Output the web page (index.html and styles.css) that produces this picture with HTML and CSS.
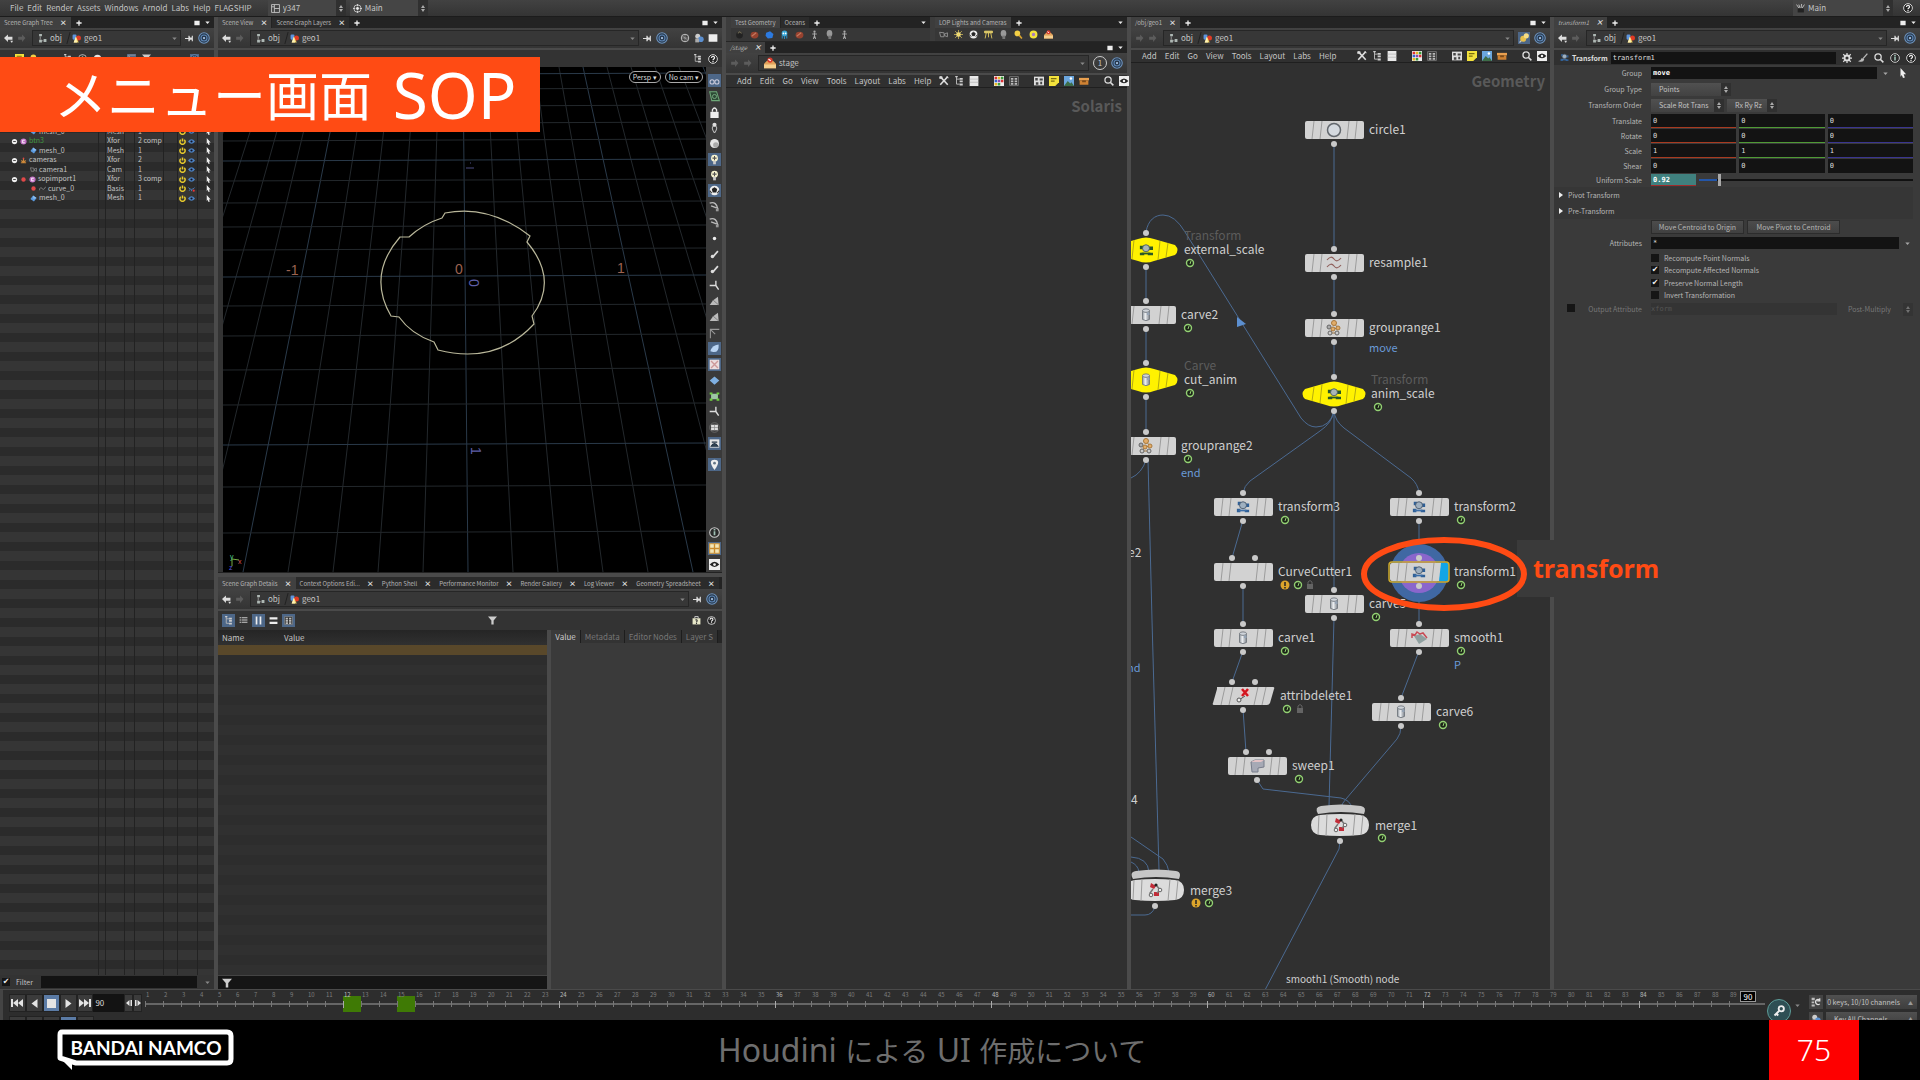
FILE: index.html
```html
<!DOCTYPE html>
<html lang="ja">
<head>
<meta charset="utf-8">
<title>メニュー画面 SOP</title>
<link rel="stylesheet" href="styles.css">
</head>
<body>
<svg class="sprite" aria-hidden="true">
  <defs>
    <linearGradient id="steel" x1="0" x2="1"><stop offset="0" stop-color="#8f959c"/><stop offset=".4" stop-color="#eef1f4"/><stop offset="1" stop-color="#7d838b"/></linearGradient>
    <symbol id="back" viewBox="0 0 16 16"><path d="M0 7l7-6v4h8v5H7v4zM11 12h5l-2 4z" fill="#ddd"/></symbol>
    <symbol id="fwd" viewBox="0 0 16 16"><path d="M15 7L9 1v4H2v5h7v4z" fill="#5c5c5c"/></symbol>
    <symbol id="obj" viewBox="0 0 16 16"><path d="M2 0h5v4H2zM2 10h5v5H2zM10 9h5v5h-5z" fill="#aeb8b4"/><path d="M4 4v6M7 12h3" stroke="#888" stroke-width="2"/></symbol>
    <symbol id="geo" viewBox="0 0 16 16"><rect x="1" y="1" width="7" height="9" rx="2" fill="#5d94dc"/><circle cx="11.500" cy="7" r="4.500" fill="#e03a24"/><path d="M7 5l5 10H3z" fill="#f4d667"/><path d="M7 5l2 10H3z" fill="#fff3b8"/></symbol>
    <symbol id="pin" viewBox="0 0 16 16"><path d="M0 7h6v2H0zM6 3h2l1 3h3V3h2v10h-2v-3H9l-1 3H6z" fill="#ddd"/></symbol>
    <symbol id="target" viewBox="0 0 16 16"><circle cx="8" cy="8" r="7" fill="#25364a" stroke="#6e93bd" stroke-width="1.500"/><circle cx="8" cy="8" r="4" fill="none" stroke="#5d86b5" stroke-width="1.500"/><circle cx="8" cy="8" r="1.500" fill="#a9c4e4"/></symbol>
    <symbol id="help" viewBox="0 0 16 16"><circle cx="8" cy="8" r="7" fill="#222" stroke="#ddd" stroke-width="1.500"/><path d="M5.500 6.500c0-3.500 5-3.500 5-.5 0 2-2.500 2-2.500 4M8 11v2" fill="none" stroke="#eee" stroke-width="2"/></symbol>
    <symbol id="info" viewBox="0 0 16 16"><circle cx="8" cy="8" r="7" fill="#2a2a2a" stroke="#ccc" stroke-width="1.500"/><path d="M8 3v2M8 6v6" stroke="#9fc0b4" stroke-width="2.500"/></symbol>
    <symbol id="search" viewBox="0 0 16 16"><circle cx="6.500" cy="6.500" r="5" fill="none" stroke="#ddd" stroke-width="2"/><path d="M10 10l5 5" stroke="#ddd" stroke-width="2.500"/></symbol>
    <symbol id="eye" viewBox="0 0 16 16"><path d="M0 0h16v16H0z" fill="#eee"/><path d="M1 8q7-8 14 0-7 7-14 0z" fill="#222"/><circle cx="8" cy="8" r="2" fill="#eee"/></symbol>
    <symbol id="tools" viewBox="0 0 16 16"><path d="M2 1l12 13M14 1L2 14" stroke="#ddd" stroke-width="2.500"/><path d="M1 1h4v3H1zM12 0l4 4" stroke="#ddd" fill="#ddd" stroke-width="1"/></symbol>
    <symbol id="tree" viewBox="0 0 16 16"><path d="M4 1v12M4 5h5M4 13h5" fill="none" stroke="#bbb" stroke-width="1.500"/><path d="M9 3h5v3H9zM9 7h5v3H9zM9 12h5v3H9zM2 0h4v2H2z" fill="#ccc"/></symbol>
    <symbol id="list" viewBox="0 0 16 16"><path d="M1 0h14v16H1z" fill="#e8e8e8"/><path d="M1 5h14M1 10h14" stroke="#aaa"/></symbol>
    <symbol id="bullets" viewBox="0 0 16 16"><path d="M1 2h3v2H1zM5 2h10v2H5zM1 6h3v2H1zM5 6h10v2H5zM1 10h3v2H1zM5 10h10v2H5z" fill="#ccc"/></symbol>
    <symbol id="columns" viewBox="0 0 16 16"><path d="M3 1h3v14H3zM10 1h3v14h-3z" fill="#eee"/></symbol>
    <symbol id="rows" viewBox="0 0 16 16"><path d="M1 2h14v4H1zM1 10h14v4H1z" fill="#eee"/></symbol>
    <symbol id="kit" viewBox="0 0 16 16"><path d="M1 4h14v11H1z" fill="#e6e6c8"/><path d="M5 4V1h6v3" fill="none" stroke="#ddd" stroke-width="1.500"/><path d="M6 7q4-1 3 2l-1 2M8 12v2" fill="none" stroke="#333" stroke-width="2"/></symbol>
    <symbol id="colors" viewBox="0 0 16 16"><path d="M0 0h16v16H0z" fill="#eee"/><path d="M1 1h4v4H1zM11 6h4v4h-4z" fill="#d33"/><path d="M6 1h4v4H6zM1 11h4v4H1z" fill="#e9b824"/><path d="M11 1h4v4h-4zM6 11h4v4H6z" fill="#3a9c3a"/><path d="M1 6h4v4H1z" fill="#36c"/><path d="M6 6h4v4H6z" fill="#8a4ab0"/></symbol>
    <symbol id="cells" viewBox="0 0 16 16"><path d="M1 1h14v14H1z" fill="#333" stroke="#999"/><path d="M3 3h4v3H3zM9 3h4v3H9zM3 7h4v3H3zM9 7h4v3H9zM3 11h4v3H3zM9 11h4v3H9z" fill="#bbb"/></symbol>
    <symbol id="layout" viewBox="0 0 16 16"><path d="M1 1h14v14H1zM6 1v14M6 8h9M1 5h5" fill="none" stroke="#ccc" stroke-width="1.500"/></symbol>
    <symbol id="radial" viewBox="0 0 16 16"><circle cx="8" cy="8" r="6.500" fill="none" stroke="#ccc" stroke-width="1.500"/><circle cx="8" cy="8" r="2.500" fill="#eee"/><path d="M8 0v4M8 12v4M0 8h4M12 8h4" stroke="#ccc" stroke-width="2"/></symbol>
    <symbol id="net" viewBox="0 0 16 16"><path d="M0 1h16v14H0z" fill="#ddd"/><path d="M2 3h4v4H2zM9 4h5v3H9zM3 10h4v4H3zM10 9h3v4h-3z" fill="#444"/></symbol>
    <symbol id="note" viewBox="0 0 16 16"><path d="M0 0h16v10l-6 6H0z" fill="#f3e23c"/><path d="M3 4h9M3 8h6" stroke="#7a6d10" stroke-width="2"/></symbol>
    <symbol id="image" viewBox="0 0 16 16"><path d="M0 0h16v16H0z" fill="#6ba6de"/><path d="M0 16l6-8 4 4 2-2 4 6z" fill="#3d6d48"/><circle cx="11" cy="4" r="2" fill="#fff"/></symbol>
    <symbol id="box" viewBox="0 0 16 16"><path d="M0 3h16v4H0z" fill="#e9a050"/><path d="M1 7h14v7H1z" fill="#cf8233"/><path d="M5 7h6v3H5z" fill="#7c4a18"/></symbol>
    <symbol id="gear" viewBox="0 0 16 16"><circle cx="8" cy="8" r="4" fill="none" stroke="#ddd" stroke-width="3"/><path d="M8 0v3M8 13v3M0 8h3M13 8h3M2 2l3 3M11 11l3 3M14 2l-3 3M2 14l3-3" stroke="#ddd" stroke-width="2"/></symbol>
    <symbol id="brush" viewBox="0 0 16 16"><path d="M15 1L8 9" stroke="#bbb" stroke-width="2"/><path d="M0 13q5-1 6-5l4 2q-1 6-10 3z" fill="#bbb"/></symbol>
    <symbol id="cursor" viewBox="0 0 16 16"><path d="M4 0l9 10H9l2 5-3 1-2-5-2 3z" fill="#eee"/></symbol>
    <symbol id="win" viewBox="0 0 16 16"><path d="M1 2h14v12H1z" fill="#eee"/></symbol>
    <symbol id="caret" viewBox="0 0 16 16"><path d="M1 5h14l-7 8z" fill="#eee"/></symbol>
    <symbol id="caret-dim" viewBox="0 0 16 16"><path d="M1 5h14l-7 8z" fill="#888"/></symbol>
    <symbol id="plus" viewBox="0 0 16 16"><path d="M8 1v14M1 8h14" stroke="#eee" stroke-width="3.500"/></symbol>
    <symbol id="funnel" viewBox="0 0 16 16"><path d="M0 1h16l-6 7v7H6V8z" fill="#ccc"/></symbol>
    <symbol id="power" viewBox="0 0 16 16"><path d="M4 4a6 6 0 1 0 8 0M8 1v7" fill="none" stroke="#e6c92c" stroke-width="3.500"/></symbol>
    <symbol id="view" viewBox="0 0 16 16"><path d="M0 8q8-10 16 0-8 10-16 0z" fill="#4d83c4"/><circle cx="8" cy="8" r="2.500" fill="#112"/></symbol>
    <symbol id="mesh" viewBox="0 0 16 16"><path d="M7 1l8 6-6 8-8-6z" fill="#5b9be0"/><path d="M7 1l1 8 7-2" fill="#8fc0f2"/></symbol>
    <symbol id="comp" viewBox="0 0 16 16"><circle cx="8" cy="8" r="7" fill="#c06fc4"/><path d="M11 5H6v6h5" fill="none" stroke="#fff" stroke-width="2"/></symbol>
    <symbol id="minus" viewBox="0 0 16 16"><circle cx="8" cy="8" r="6" fill="#eee"/><path d="M5 8h6" stroke="#333" stroke-width="2"/></symbol>
    <symbol id="cams" viewBox="0 0 16 16"><path d="M2 13h12M8 2v10M3 8l5 4 5-4" stroke="#d08a3a" stroke-width="2.500" fill="none"/><circle cx="8" cy="3" r="2" fill="#d44"/></symbol>
    <symbol id="cam" viewBox="0 0 16 16"><path d="M1 4l8 1v7H3zM10 7l5-2v7l-5-2z" fill="none" stroke="#999" stroke-width="1.500"/></symbol>
    <symbol id="curve" viewBox="0 0 16 16"><path d="M1 12C4-4 9 20 15 4" fill="none" stroke="#aaa" stroke-width="1.500"/></symbol>
    <symbol id="lid" viewBox="0 0 16 16"><path d="M1 6q7 8 14 0M4 10l-1 3M8 11v3" fill="none" stroke="#4d83c4" stroke-width="2"/><circle cx="13" cy="13" r="2.500" fill="#e33"/></symbol>
    <symbol id="rdot" viewBox="0 0 16 16"><circle cx="8" cy="8" r="5" fill="#e04848"/></symbol>
    <symbol id="stage" viewBox="0 0 16 16"><path d="M0 9l4-4h8l4 4v6H0z" fill="#e3a25a"/><path d="M0 10h16v5H0z" fill="#f5cf8e"/><circle cx="8" cy="4" r="3.500" fill="#d83a2c"/><path d="M6 3l3 2" stroke="#fff" stroke-width="1.500"/></symbol>
    <symbol id="globe" viewBox="0 0 16 16"><circle cx="8" cy="8" r="6" fill="none" stroke="#ccc" stroke-width="1.500"/><path d="M2 8h12M8 2v12M3 4l10 8" stroke="#aaa"/></symbol>
    <symbol id="people" viewBox="0 0 16 16"><circle cx="6" cy="5" r="4" fill="#ccc"/><circle cx="11" cy="10" r="4.500" fill="#5b8fd0"/><path d="M2 9h6v6H2z" fill="#aaa"/></symbol>
    <symbol id="brushes" viewBox="0 0 16 16"><path d="M1 1l4 6M5 1l2 6M10 0l-1 7M15 1l-4 6" stroke="#ccc" stroke-width="1.500"/><path d="M3 8h11v7H3z" fill="#222"/></symbol>
    <symbol id="sun" viewBox="0 0 16 16"><circle cx="8" cy="8" r="4" fill="#fff3a0"/><path d="M8 0v16M0 8h16M2 2l12 12M14 2L2 14" stroke="#e8d060" stroke-width="1.200"/></symbol>
    <symbol id="lamp" viewBox="0 0 16 16"><path d="M1 2h14v3H1zM4 5L2 15M12 5l2 10M8 5v8" stroke="#e8d060" stroke-width="1.500" fill="#f5e690"/></symbol>
    <symbol id="bulb" viewBox="0 0 16 16"><circle cx="6" cy="6" r="5" fill="#f3cf45"/><path d="M9 9l5 6" stroke="#dba52e" stroke-width="3"/></symbol>
    <symbol id="pushpin" viewBox="0 0 16 16"><path d="M2 14l5-5" stroke="#ccc" stroke-width="1.500"/><circle cx="7" cy="9" r="4" fill="#e8c04a"/><circle cx="11" cy="5" r="3.500" fill="#f6dd86"/></symbol>
    <symbol id="ring" viewBox="0 0 16 16"><circle cx="8" cy="8" r="5" fill="#a97cc0" stroke="#f3e23c" stroke-width="4"/></symbol>
    <symbol id="rock" viewBox="0 0 16 16"><circle cx="8" cy="9" r="6" fill="#222"/><path d="M5 6l3-3 4 3" stroke="#6a6450" stroke-width="2" fill="none"/></symbol>
    <symbol id="clay" viewBox="0 0 16 16"><ellipse cx="8" cy="9" rx="7" ry="6" fill="#96422f"/><path d="M3 11l8-6" stroke="#c57a60" stroke-width="2"/></symbol>
    <symbol id="cube" viewBox="0 0 16 16"><path d="M2 5l7-3 6 5-2 7-8 1-4-5z" fill="#2c7ae0"/></symbol>
    <symbol id="squid" viewBox="0 0 16 16"><circle cx="8" cy="6" r="5" fill="#3aa8d8"/><path d="M4 9v6M8 10v6M12 9v6" stroke="#2b88bb" stroke-width="2"/><circle cx="6" cy="6" r="1.500" fill="#fff"/><circle cx="10" cy="6" r="1.500" fill="#fff"/></symbol>
    <symbol id="man" viewBox="0 0 16 16"><circle cx="8" cy="3" r="2" fill="#aaa"/><path d="M8 5v6M4 7h8M8 10l-2 6M8 10l2 6" stroke="#aaa" stroke-width="1.800"/></symbol>
    <symbol id="head" viewBox="0 0 16 16"><ellipse cx="8" cy="6" rx="5" ry="6" fill="#999"/><path d="M6 10h5v6H6z" fill="#777"/></symbol>
    <symbol id="lock" viewBox="0 0 16 16"><path d="M2 7h12v9H2z" fill="#eee"/><path d="M5 7V4q3-5 6 0v3" fill="none" stroke="#eee" stroke-width="2"/></symbol>
    <symbol id="glasses" viewBox="0 0 16 16"><circle cx="4.500" cy="10" r="3" fill="none" stroke="#ccd" stroke-width="1.500"/><circle cx="11.500" cy="10" r="3" fill="none" stroke="#ccd" stroke-width="1.500"/></symbol>
    <symbol id="plane" viewBox="0 0 16 16"><path d="M1 1h10l4 13H4z" fill="#2d4a35" stroke="#6ea878" stroke-width="1.500"/><circle cx="8" cy="8" r="3" fill="none" stroke="#8fc89a"/></symbol>
    <symbol id="head-light" viewBox="0 0 16 16"><circle cx="8" cy="6" r="5" fill="#f7f3cf"/><path d="M6 10h4v5H6z" fill="#ccc"/><path d="M8 3v6M5 6h6" stroke="#555" stroke-width="1.500"/></symbol>
    <symbol id="moon" viewBox="0 0 16 16"><circle cx="8" cy="8" r="6.500" fill="#e4e4e4"/><circle cx="10" cy="10" r="4" fill="#aaa"/></symbol>
    <symbol id="marker" viewBox="0 0 16 16"><path d="M8 16C-3 2 19 2 8 16z" fill="none" stroke="#bbb" stroke-width="1.500"/><circle cx="8" cy="4" r="3" fill="#ddd"/></symbol>
    <symbol id="drop" viewBox="0 0 16 16"><path d="M8 16C0 5 2 1 8 1s8 4 0 15z" fill="#eee"/><circle cx="8" cy="6" r="2" fill="#678"/></symbol>
    <symbol id="ball" viewBox="0 0 16 16"><circle cx="8" cy="8" r="7" fill="#eee"/><path d="M5 6l3-2 3 2-1 4H6zM1 8l3 4M15 8l-3 4" fill="#222" stroke="#222" stroke-width="1.500"/></symbol>
    <symbol id="wing" viewBox="0 0 16 16"><path d="M1 3q10-3 12 9M3 7l8 3" fill="none" stroke="#bbb" stroke-width="2"/><path d="M10 11h4v4h-4z" fill="#999"/></symbol>
    <symbol id="dot" viewBox="0 0 16 16"><circle cx="8" cy="8" r="2.500" fill="#eee"/></symbol>
    <symbol id="stroke" viewBox="0 0 16 16"><path d="M13 3L6 11" stroke="#ddd" stroke-width="2.500"/><circle cx="5" cy="11" r="2.500" fill="#ddd"/></symbol>
    <symbol id="facet" viewBox="0 0 16 16"><path d="M1 13l5-7 7-5 1 12z" fill="#bbb"/><path d="M6 6l8 7" stroke="#666"/></symbol>
    <symbol id="corner" viewBox="0 0 16 16"><path d="M2 15V2h13M3 3l6 6" fill="none" stroke="#999" stroke-width="1.500"/></symbol>
    <symbol id="leaf" viewBox="0 0 16 16"><path d="M2 12Q4 3 14 2q1 12-8 11z" fill="#b9d4f3"/></symbol>
    <symbol id="check" viewBox="0 0 16 16"><path d="M1 1h14v14H1z" fill="#eadede"/><path d="M3 3l10 10M13 3L3 13" stroke="#c99" stroke-width="2"/></symbol>
    <symbol id="diamond" viewBox="0 0 16 16"><path d="M8 2l7 6-7 6-7-6z" fill="#7fb0e2"/></symbol>
    <symbol id="handles" viewBox="0 0 16 16"><path d="M3 4h10v8H3z" fill="#9ec7a5"/><path d="M1 2h4v3H1zM11 2h4v3h-4zM1 11h4v3H1zM11 11h4v3h-4z" fill="#6fd040"/></symbol>
    <symbol id="axes" viewBox="0 0 16 16"><path d="M10 8V1M10 8H1M10 8l4 6" stroke="#ddd" stroke-width="2"/></symbol>
    <symbol id="frame4" viewBox="0 0 16 16"><circle cx="8" cy="8" r="7" fill="none" stroke="#777"/><path d="M3 4h10v8H3z" fill="#ddd"/><path d="M8 4v8M3 8h10" stroke="#888"/></symbol>
    <symbol id="photo" viewBox="0 0 16 16"><path d="M1 2h14v12H1z" fill="#e4e4e4"/><path d="M3 12q5-8 10 0zM4 6h8" stroke="#234" fill="#345" stroke-width="1.500"/></symbol>
    <symbol id="grid4" viewBox="0 0 16 16"><path d="M1 1h14v14H1z" fill="#f2e6b8"/><path d="M8 1v14M1 8h14" stroke="#c98a2c" stroke-width="2"/><path d="M1 1h14v14H1z" fill="none" stroke="#d69a3c" stroke-width="1.500"/></symbol>
    <symbol id="key" viewBox="0 0 16 16"><circle cx="11" cy="5" r="3.500" fill="none" stroke="#eee" stroke-width="2.500"/><path d="M8 8l-6 6M4 11l3 3" stroke="#eee" stroke-width="2.500"/></symbol>
    <symbol id="scope" viewBox="0 0 16 16"><path d="M1 1h5v4H1zM1 7h4v3H1zM1 12h5v3H1z" fill="#bbb"/><path d="M14 5a4 4 0 1 0 0 6M14 2v4h-4" fill="none" stroke="#ddd" stroke-width="2"/></symbol>
    <symbol id="node-x" viewBox="0 0 16 16"><path d="M2 2h4v4H2z" fill="#2f5f96"/><path d="M1 10h4v4H1zM10 11h5v3h-5zM11 4h4v4h-4z" fill="#2f5f96"/><circle cx="8" cy="6" r="4" fill="#9fb0c0" stroke="#46576a"/><path d="M3 12h9" fill="none" stroke="#3c6ea8" stroke-width="2"/></symbol>
    <symbol id="node-xy" viewBox="0 0 16 16"><path d="M1 3h5v4H1zM1 11h5v3H1zM10 11h6v3h-6zM11 4h5v4h-5z" fill="#28572a"/><circle cx="8" cy="6" r="4" fill="#a9b6b6" stroke="#465a5a"/><path d="M3 12h10" stroke="#28572a" stroke-width="2"/></symbol>
    <symbol id="node-tube" viewBox="0 0 16 16"><path d="M4 3v10q4 3 8 0V3z" fill="url(#steel)" stroke="#70767d"/><ellipse cx="8" cy="3" rx="4" ry="2" fill="#cfd4da" stroke="#70767d"/><path d="M9 5h3v3H9z" fill="#96a4b5"/></symbol>
    <symbol id="node-group" viewBox="0 0 16 16"><path d="M7 2l5 6-5 1-3 4 7 0" fill="none" stroke="#a8783c"/><circle cx="8" cy="3" r="2.500" fill="#e2ad6a" stroke="#a8783c"/><circle cx="3" cy="7" r="2" fill="#aaa" stroke="#666"/><circle cx="12" cy="8" r="2" fill="#e2ad6a" stroke="#a8783c"/><circle cx="7" cy="9" r="2" fill="#e2ad6a" stroke="#a8783c"/><circle cx="4" cy="13" r="2" fill="#ccc" stroke="#666"/><circle cx="11" cy="13" r="2" fill="#ccc" stroke="#666"/></symbol>
    <symbol id="node-merge" viewBox="0 0 16 16"><path d="M4 1l5 3-2 3-4-2zM7 10h5v4H7z" fill="#c22c38"/><path d="M10 4l3 4-3 3M6 7l-3 4 3 2" fill="none" stroke="#777" stroke-width="1.500"/><circle cx="9" cy="3" r="1.600" fill="#222"/><circle cx="13" cy="8" r="1.800" fill="#eee" stroke="#666"/><circle cx="4" cy="13" r="1.800" fill="#eee" stroke="#666"/></symbol>
    <g id="bar"><rect x="-29" y="-9" width="59" height="18" rx="2" fill="#d2d2d2"/><path d="M-22 9l2-18M-14 9l2-18M13 9l2-18M21 9l2-18" stroke="#9c9c9c"/></g>
    <g id="hex"><path d="M-29-5L-8-11Q0-14 8-11L29-5Q34 0 29 5L8 11Q0 14-8 11L-29 5Q-34 0-29-5z" fill="#fff200"/><path d="M-22 7l2-14M-14 9l2-19M12 10l2-19M20 7l2-14" stroke="#b5ac10"/></g>
    <g id="lozenge"><path d="M-20-10q20-2 40 0 9 1 9 10t-9 10q-20 2-40 0-9-1-9-10t9-10z" fill="#dcdcdc"/><path d="M-22-11q-4-7 3-8 20-3 40 0 6 1 3 8-23-4-46 0z" fill="#c6c6c6"/><path d="M-22 10l1-20M-14 11l1-22M13 11l2-22M21 10l2-20" stroke="#9c9c9c"/></g>
    <circle id="port" r="3" fill="#c9c9c9"/>
    <g id="clock"><circle r="3.500" fill="#1c2418" stroke="#93d173" stroke-width="1.400"/><path d="M0 1l1-3" stroke="#93d173"/></g>
    <g id="warn"><circle r="4.500" fill="#dca52c"/><path d="M0-3v4M0 2v1.500" stroke="#222" stroke-width="1.500"/></g>
    <g id="padlock"><path d="M-3-1h6v5h-6z" fill="#646464"/><path d="M-2-1v-2q2-3 4 0v2" fill="none" stroke="#646464"/></g>
  </defs>
</svg>

<div class="app">
  <header class="menubar">
    <nav class="menus"><a href="#">File</a><a href="#">Edit</a><a href="#">Render</a><a href="#">Assets</a><a href="#">Windows</a><a href="#">Arnold</a><a href="#">Labs</a><a href="#">Help</a><a href="#">FLAGSHIP</a></nav>
    <div class="desk"><svg class="ic"><use href="#layout"/></svg><select aria-label="Desktop"><option>y347</option></select><i class="spin"></i></div>
    <div class="desk"><svg class="ic"><use href="#radial"/></svg><select aria-label="Radial menu"><option>Main</option></select><i class="spin"></i></div>
    <div class="desk last"><svg class="ic"><use href="#brushes"/></svg><select aria-label="Shelf set"><option>Main</option></select><i class="spin"></i></div>
    <svg class="ic ic10"><use href="#help"/></svg>
  </header>

  <main class="panes">
    <section class="pane">
      <div class="tabs"><button class="tab on">Scene Graph Tree<b>×</b></button><svg class="ic ic6"><use href="#plus"/></svg><span class="grow"></span><svg class="ic ic6"><use href="#win"/></svg><svg class="ic ic5"><use href="#caret"/></svg></div>
      <div class="path"><svg class="ic"><use href="#back"/></svg><svg class="ic"><use href="#fwd"/></svg><div class="crumbs"><svg class="ic"><use href="#obj"/></svg>obj<i class="sep"></i><svg class="ic"><use href="#geo"/></svg>geo1<span class="grow"></span><svg class="ic ic5"><use href="#caret-dim"/></svg></div><svg class="ic"><use href="#pin"/></svg><svg class="ic ic12"><use href="#target"/></svg></div>
      <div class="tools wide"><svg class="ic"><use href="#note"/></svg><svg class="ic"><use href="#bulb"/></svg><span class="grow"></span><svg class="ic"><use href="#tree"/></svg><svg class="ic"><use href="#info"/></svg><svg class="ic"><use href="#moon"/></svg><span class="grow"></span><svg class="ic lit"><use href="#corner"/></svg><svg class="ic"><use href="#funnel"/></svg><svg class="ic"><use href="#dot"/></svg><span class="grow"></span><svg class="ic lit"><use href="#target"/></svg></div>
      <div class="treebox">
        <table class="tree">
          <tr><td class="d2"><svg class="ic ic7"><use href="#mesh"/></svg>mesh_0</td><td>Mesh</td><td>1</td><td><svg class="ic ic7"><use href="#power"/></svg><svg class="ic ic7"><use href="#view"/></svg><svg class="ic ic7"><use href="#cursor"/></svg></td></tr>
          <tr><td><svg class="ic ic7"><use href="#minus"/></svg><svg class="ic ic7"><use href="#comp"/></svg><em>btn3</em></td><td>Xfor</td><td>2 comp</td><td><svg class="ic ic7"><use href="#power"/></svg><svg class="ic ic7"><use href="#view"/></svg><svg class="ic ic7"><use href="#cursor"/></svg></td></tr>
          <tr><td class="d2"><svg class="ic ic7"><use href="#mesh"/></svg>mesh_0</td><td>Mesh</td><td>1</td><td><svg class="ic ic7"><use href="#power"/></svg><svg class="ic ic7"><use href="#view"/></svg><svg class="ic ic7"><use href="#cursor"/></svg></td></tr>
          <tr><td><svg class="ic ic7"><use href="#minus"/></svg><svg class="ic ic7"><use href="#cams"/></svg>cameras</td><td>Xfor</td><td>2</td><td><svg class="ic ic7"><use href="#power"/></svg><svg class="ic ic7"><use href="#view"/></svg><svg class="ic ic7"><use href="#cursor"/></svg></td></tr>
          <tr><td class="d2"><svg class="ic ic7"><use href="#cam"/></svg>camera1</td><td>Cam</td><td>1</td><td><svg class="ic ic7"><use href="#power"/></svg><svg class="ic ic7"><use href="#view"/></svg><svg class="ic ic7"><use href="#cursor"/></svg></td></tr>
          <tr><td><svg class="ic ic7"><use href="#minus"/></svg><svg class="ic ic7"><use href="#rdot"/></svg><svg class="ic ic7"><use href="#comp"/></svg>sopimport1</td><td>Xfor</td><td>3 comp</td><td><svg class="ic ic7"><use href="#power"/></svg><svg class="ic ic7"><use href="#view"/></svg><svg class="ic ic7"><use href="#cursor"/></svg></td></tr>
          <tr><td class="d2"><svg class="ic ic7"><use href="#rdot"/></svg><svg class="ic ic7"><use href="#curve"/></svg>curve_0</td><td>Basis</td><td>1</td><td><svg class="ic ic7"><use href="#power"/></svg><svg class="ic ic7"><use href="#lid"/></svg><svg class="ic ic7"><use href="#cursor"/></svg></td></tr>
          <tr><td class="d2"><svg class="ic ic7"><use href="#mesh"/></svg>mesh_0</td><td>Mesh</td><td>1</td><td><svg class="ic ic7"><use href="#power"/></svg><svg class="ic ic7"><use href="#view"/></svg><svg class="ic ic7"><use href="#cursor"/></svg></td></tr>
        </table>
      </div>
      <div class="filter"><label><input type="checkbox" checked>Filter</label><input type="text" class="dark" aria-label="Filter text"><svg class="ic ic5"><use href="#caret-dim"/></svg></div>
    </section>

    <section class="pane">
      <div class="tabs"><button class="tab on">Scene View<b>×</b></button><button class="tab">Scene Graph Layers<b>×</b></button><svg class="ic ic6"><use href="#plus"/></svg><span class="grow"></span><svg class="ic ic6"><use href="#win"/></svg><svg class="ic ic5"><use href="#caret"/></svg></div>
      <div class="path"><svg class="ic"><use href="#back"/></svg><svg class="ic"><use href="#fwd"/></svg><div class="crumbs"><svg class="ic"><use href="#obj"/></svg>obj<i class="sep"></i><svg class="ic"><use href="#geo"/></svg>geo1<span class="grow"></span><svg class="ic ic5"><use href="#caret-dim"/></svg></div><svg class="ic"><use href="#pin"/></svg><svg class="ic ic12"><use href="#target"/></svg><span class="gap4"></span><svg class="ic ic10"><use href="#globe"/></svg><svg class="ic ic10"><use href="#people"/></svg><svg class="ic ic10"><use href="#win"/></svg></div>
      <div class="tools"><span class="grow"></span><svg class="ic"><use href="#tree"/></svg><svg class="ic ic10"><use href="#help"/></svg></div>
      <div class="scene">
        <div class="viewport">
          <svg class="grid3d" id="grid">
            <g id="lines"></g>
            <g fill="none" stroke="#b9b79a" stroke-width="1.200"><path d="M222 146Q266 137 307 169L304 175Q336 213 309 249L311 257Q273 298 215 283L211 275Q188 267 176 250L168 249Q144 208 177 170H186Q200 157 219 151z"/></g>
            <g class="axis-x"><text x="63" y="208">-1</text><text x="232" y="207">0</text><text x="394" y="206">1</text></g>
            <g class="axis-z"><text transform="translate(246 212) rotate(90)">0</text><text transform="translate(248 380) rotate(90)">1</text><path d="M243 101h8M247 96h1" stroke="#4d4d80"/></g>
            <path d="M9 499v-7l7 1" fill="none" stroke="#7a4"/><g class="gnomon"><text x="7" y="492" fill="#5c8">y</text><text x="15" y="497" fill="#d55">x</text><text x="6" y="503" fill="#55d">z</text></g>
          </svg>
          <div class="pills"><button>Persp ▾</button><button>No cam ▾</button></div>
        </div>
        <div class="rail">
          <div class="railtop">
            <svg class="ic lit"><use href="#glasses"/></svg><svg class="ic"><use href="#plane"/></svg><svg class="ic"><use href="#lock"/></svg><svg class="ic"><use href="#marker"/></svg><svg class="ic"><use href="#moon"/></svg><svg class="ic lit"><use href="#head-light"/></svg><svg class="ic"><use href="#head-light"/></svg><svg class="ic lit"><use href="#ball"/></svg><svg class="ic"><use href="#wing"/></svg><svg class="ic"><use href="#wing"/></svg><svg class="ic"><use href="#dot"/></svg><svg class="ic"><use href="#stroke"/></svg><svg class="ic"><use href="#stroke"/></svg><svg class="ic"><use href="#axes"/></svg><svg class="ic"><use href="#facet"/></svg><svg class="ic"><use href="#facet"/></svg><svg class="ic"><use href="#corner"/></svg><svg class="ic lit"><use href="#leaf"/></svg><svg class="ic lit"><use href="#check"/></svg><svg class="ic"><use href="#diamond"/></svg><svg class="ic"><use href="#handles"/></svg><svg class="ic"><use href="#axes"/></svg><svg class="ic"><use href="#frame4"/></svg><svg class="ic lit"><use href="#photo"/></svg>
          </div>
          <svg class="ic lit"><use href="#drop"/></svg>
          <span class="grow"></span>
          <svg class="ic"><use href="#info"/></svg><svg class="ic lit"><use href="#grid4"/></svg><svg class="ic"><use href="#eye"/></svg>
        </div>
      </div>
      <div class="details">
        <div class="tabs"><button class="tab on">Scene Graph Details<b>×</b></button><button class="tab">Context Options Edi...<b>×</b></button><button class="tab">Python Shell<b>×</b></button><button class="tab">Performance Monitor<b>×</b></button><button class="tab">Render Gallery<b>×</b></button><button class="tab">Log Viewer<b>×</b></button><button class="tab">Geometry Spreadsheet<b>×</b></button><span class="grow"></span><svg class="ic ic6"><use href="#plus"/></svg><svg class="ic ic6"><use href="#win"/></svg><svg class="ic ic5"><use href="#caret"/></svg></div>
        <div class="path"><svg class="ic"><use href="#back"/></svg><svg class="ic"><use href="#fwd"/></svg><div class="crumbs"><svg class="ic"><use href="#obj"/></svg>obj<i class="sep"></i><svg class="ic"><use href="#geo"/></svg>geo1<span class="grow"></span><svg class="ic ic5"><use href="#caret-dim"/></svg></div><svg class="ic"><use href="#pin"/></svg><svg class="ic ic12"><use href="#target"/></svg></div>
        <div class="tools roomy"><svg class="ic lit"><use href="#tree"/></svg><svg class="ic"><use href="#bullets"/></svg><svg class="ic lit"><use href="#columns"/></svg><svg class="ic"><use href="#rows"/></svg><svg class="ic lit"><use href="#cells"/></svg><span class="grow"></span><svg class="ic"><use href="#funnel"/></svg><span class="grow"></span><svg class="ic"><use href="#kit"/></svg><svg class="ic"><use href="#help"/></svg></div>
        <div class="split">
          <div class="sheet">
            <table class="props"><thead><tr><th>Name</th><th>Value</th></tr></thead><tbody><tr><td></td><td></td></tr></tbody></table>
            <div class="stripes"></div>
            <div class="funnelbar"><svg class="ic ic10"><use href="#funnel"/></svg></div>
          </div>
          <div class="meta"><div class="metatabs"><button class="on">Value</button><button>Metadata</button><button>Editor Nodes</button><button>Layer S</button></div></div>
        </div>
      </div>
    </section>

    <section class="pane">
      <div class="shelves">
        <div class="shelf"><div class="tabs"><button class="tab on">Test Geometry</button><button class="tab">Oceans</button><svg class="ic ic6"><use href="#plus"/></svg><span class="grow"></span><svg class="ic ic5"><use href="#caret"/></svg></div>
          <div class="shelficons"><svg class="ic"><use href="#rock"/></svg><svg class="ic"><use href="#clay"/></svg><svg class="ic"><use href="#cube"/></svg><svg class="ic"><use href="#squid"/></svg><svg class="ic"><use href="#clay"/></svg><svg class="ic"><use href="#man"/></svg><svg class="ic"><use href="#head"/></svg><svg class="ic"><use href="#man"/></svg></div></div>
        <div class="shelf"><div class="tabs"><button class="tab on">LOP Lights and Cameras</button><svg class="ic ic6"><use href="#plus"/></svg><span class="grow"></span><svg class="ic ic5"><use href="#caret"/></svg></div>
          <div class="shelficons tightest"><svg class="ic"><use href="#cam"/></svg><svg class="ic"><use href="#sun"/></svg><svg class="ic"><use href="#ball"/></svg><svg class="ic"><use href="#lamp"/></svg><svg class="ic"><use href="#head"/></svg><svg class="ic"><use href="#bulb"/></svg><svg class="ic"><use href="#ring"/></svg><svg class="ic"><use href="#stage"/></svg></div></div>
      </div>
      <div class="tabs"><button class="tab on it">/stage<b>×</b></button><svg class="ic ic6"><use href="#plus"/></svg><span class="grow"></span><svg class="ic ic6"><use href="#win"/></svg><svg class="ic ic5"><use href="#caret"/></svg></div>
      <div class="path"><svg class="ic"><use href="#fwd"/></svg><svg class="ic"><use href="#fwd"/></svg><div class="crumbs"><svg class="ic ic12"><use href="#stage"/></svg>stage<span class="grow"></span><svg class="ic ic5"><use href="#caret-dim"/></svg></div><span class="one">1</span><svg class="ic ic12"><use href="#target"/></svg></div>
      <div class="netmenu"><a href="#">Add</a><a href="#">Edit</a><a href="#">Go</a><a href="#">View</a><a href="#">Tools</a><a href="#">Layout</a><a href="#">Labs</a><a href="#">Help</a><span class="neticons near"><svg class="ic ic10"><use href="#tools"/></svg><svg class="ic ic10"><use href="#tree"/></svg><svg class="ic ic10"><use href="#list"/></svg></span><span class="neticons"><svg class="ic ic10"><use href="#colors"/></svg><svg class="ic ic10"><use href="#cells"/></svg></span><span class="neticons"><svg class="ic ic10"><use href="#net"/></svg><svg class="ic ic10"><use href="#note"/></svg><svg class="ic ic10"><use href="#image"/></svg><svg class="ic ic10"><use href="#box"/></svg></span><span class="neticons"><svg class="ic ic10"><use href="#search"/></svg><svg class="ic ic10"><use href="#eye"/></svg></span></div>
      <div class="canvas"><p class="context">Solaris</p></div>
    </section>

    <section class="pane">
      <div class="tabs"><button class="tab on">/obj/geo1<b>×</b></button><svg class="ic ic6"><use href="#plus"/></svg><span class="grow"></span><svg class="ic ic6"><use href="#win"/></svg><svg class="ic ic5"><use href="#caret"/></svg></div>
      <div class="path"><svg class="ic"><use href="#fwd"/></svg><svg class="ic"><use href="#fwd"/></svg><div class="crumbs"><svg class="ic"><use href="#obj"/></svg>obj<i class="sep"></i><svg class="ic"><use href="#geo"/></svg>geo1<span class="grow"></span><svg class="ic ic5"><use href="#caret-dim"/></svg></div><svg class="ic ic12 lit"><use href="#pushpin"/></svg><svg class="ic ic12"><use href="#target"/></svg></div>
      <div class="netmenu"><a href="#">Add</a><a href="#">Edit</a><a href="#">Go</a><a href="#">View</a><a href="#">Tools</a><a href="#">Layout</a><a href="#">Labs</a><a href="#">Help</a><span class="neticons"><svg class="ic ic10"><use href="#tools"/></svg><svg class="ic ic10"><use href="#tree"/></svg><svg class="ic ic10"><use href="#list"/></svg></span><span class="neticons"><svg class="ic ic10"><use href="#colors"/></svg><svg class="ic ic10"><use href="#cells"/></svg></span><span class="neticons"><svg class="ic ic10"><use href="#net"/></svg><svg class="ic ic10"><use href="#note"/></svg><svg class="ic ic10"><use href="#image"/></svg><svg class="ic ic10"><use href="#box"/></svg></span><span class="neticons"><svg class="ic ic10"><use href="#search"/></svg><svg class="ic ic10"><use href="#eye"/></svg></span></div>
      <div class="canvas">
        <p class="context">Geometry</p>
        <svg class="graph">
          <g transform="translate(-1131 -63)">
            <g class="wires">
              <path d="M1334 144V249M1334 277V315M1334 342V376M1334 411V590M1334 618L1329 806"/>
              <path d="M1146 232C1148 220 1155 215 1163 215Q1175 215 1185 232L1301 418Q1308 427 1316 427Q1330 427 1334 411"/>
              <path d="M1146 267V301M1146 329V363M1146 398V432M1146 460Q1142 473 1131 478M1148 460L1152 620L1159 870"/>
              <path d="M1334 411Q1332 423 1320 431L1250 481Q1244 486 1243 493M1334 411Q1335 421 1344 428L1411 478Q1418 484 1419 493"/>
              <path d="M1243 520L1232 558M1243 586V624M1243 651L1232 682M1243 709L1246 752M1257 780L1263 789L1341 798Q1350 800 1352 808"/>
              <path d="M1419 520V558M1419 586V624M1419 651L1401 698M1401 726Q1401 734 1397 739L1346 799Q1342 803 1341 808M1340 841L1339 849L1265 990"/>
              <path d="M1131 837L1163 859Q1168 865 1169 872M1131 857Q1148 858 1149 872M1131 862Q1138 865 1139 872M1155 907Q1152 915 1145 915H1131"/>
            </g>
            <path d="M1237 317l9 7-9 3z" fill="#5c8fd0"/>
            <circle cx="1419" cy="573" r="29" fill="#4068a3"/><circle cx="1419" cy="573" r="20" fill="#8a66cc"/>

            <g transform="translate(1334 130)"><use href="#bar"/><use href="#port" y="14"/><circle cx="0" cy="0" r="6.500" fill="#d4d9df" stroke="#62676d" stroke-width="1.500"/><text x="35" y="4">circle1</text></g>
            <g transform="translate(1334 263)"><use href="#bar"/><use href="#port" y="-14"/><use href="#port" y="14"/><path d="M-7-3q4-5 7-1t7-1M-7 4q4-5 7-1t7-1" fill="none" stroke="#8f5f5a" stroke-width="1.200"/><text x="35" y="4">resample1</text></g>
            <g transform="translate(1334 328)"><use href="#bar"/><use href="#port" y="-14"/><use href="#port" y="14"/><use href="#node-group" x="-8" y="-8" width="16" height="16"/><text x="35" y="4">grouprange1</text><text class="sub" x="35" y="24">move</text></g>
            <g transform="translate(1334 394)"><use href="#hex"/><use href="#port" y="-17"/><use href="#port" y="17"/><use href="#node-xy" x="-7" y="-7" width="14" height="14"/><text class="dim" x="37" y="-10">Transform</text><text x="37" y="4">anim_scale</text><use href="#clock" x="44" y="13"/></g>
            <g transform="translate(1146 250)"><use href="#hex"/><use href="#port" y="-17"/><use href="#port" y="17"/><use href="#node-xy" x="-7" y="-7" width="14" height="14"/><text class="dim" x="38" y="-10">Transform</text><text x="38" y="4">external_scale</text><use href="#clock" x="44" y="13"/></g>
            <g transform="translate(1146 315)"><use href="#bar"/><use href="#port" y="-14"/><use href="#port" y="14"/><use href="#node-tube" x="-7" y="-7" width="14" height="14"/><text x="35" y="4">carve2</text><use href="#clock" x="42" y="13"/></g>
            <g transform="translate(1146 380)"><use href="#hex"/><use href="#port" y="-17"/><use href="#port" y="17"/><use href="#node-tube" x="-7" y="-7" width="14" height="14"/><text class="dim" x="38" y="-10">Carve</text><text x="38" y="4">cut_anim</text><use href="#clock" x="44" y="13"/></g>
            <g transform="translate(1146 446)"><use href="#bar"/><use href="#port" y="-14"/><use href="#port" y="14"/><use href="#node-group" x="-8" y="-8" width="16" height="16"/><text x="35" y="4">grouprange2</text><text class="sub" x="35" y="31">end</text><use href="#clock" x="42" y="13"/></g>
            <g transform="translate(1243 507)"><use href="#bar"/><use href="#port" y="-14"/><use href="#port" y="14"/><use href="#node-x" x="-7" y="-7" width="14" height="14"/><text x="35" y="4">transform3</text><use href="#clock" x="42" y="13"/></g>
            <g transform="translate(1419 507)"><use href="#bar"/><use href="#port" y="-14"/><use href="#port" y="14"/><use href="#node-x" x="-7" y="-7" width="14" height="14"/><text x="35" y="4">transform2</text><use href="#clock" x="42" y="13"/></g>
            <g transform="translate(1243 572)"><use href="#bar"/><use href="#port" x="-11" y="-14"/><use href="#port" x="12" y="-14"/><use href="#port" y="14"/><text x="35" y="4">CurveCutter1</text><use href="#warn" x="42" y="13"/><use href="#clock" x="55" y="13"/><use href="#padlock" x="67" y="13"/></g>
            <g transform="translate(1334 604)"><use href="#bar"/><use href="#port" y="-14"/><use href="#port" y="14"/><use href="#node-tube" x="-7" y="-7" width="14" height="14"/><text x="35" y="4">carve5</text><use href="#clock" x="42" y="13"/></g>
            <g transform="translate(1419 572)"><use href="#bar"/><path d="M22-9h6q2 0 2 2V7q0 2-2 2h-8z" fill="#12a5e6"/><rect x="-30" y="-10" width="60" height="20" rx="3" fill="none" stroke="#cdaa2c" stroke-width="1.500"/><use href="#port" y="-14"/><use href="#port" y="14"/><use href="#node-x" x="-7" y="-7" width="14" height="14"/><text x="35" y="4">transform1</text><use href="#clock" x="42" y="13"/></g>
            <g transform="translate(1243 638)"><use href="#bar"/><use href="#port" y="-14"/><use href="#port" y="14"/><use href="#node-tube" x="-7" y="-7" width="14" height="14"/><text x="35" y="4">carve1</text><use href="#clock" x="42" y="13"/></g>
            <g transform="translate(1419 638)"><use href="#bar"/><use href="#port" y="-14"/><use href="#port" y="14"/><path d="M-5-2l6-2 7 5-8 5z" fill="#8fa0a0"/><path d="M-7 0v-4l3 1 2-3 3 2 3-1 4 5" fill="none" stroke="#c84b55" stroke-width="1.500"/><text x="35" y="4">smooth1</text><text class="sub" x="35" y="31">P</text><use href="#clock" x="42" y="13"/></g>
            <g transform="translate(1243 696)"><path d="M-26-9H30q2 0 1 2l-4 14q-1 2-3 2h-53q-2 0-1-2l4-14q0-2 0-2z" fill="#d2d2d2"/><path d="M-22 9l4-18M-14 9l4-18M11 9l4-18M19 9l4-18" stroke="#9c9c9c"/><use href="#port" x="-11" y="-14"/><use href="#port" x="12" y="-14"/><use href="#port" y="14"/><path d="M-3-7h10v7H-3z" fill="#e8c8c8"/><path d="M-1-7l6 7M5-7l-6 7" stroke="#d4141e" stroke-width="2.500"/><path d="M2 0l-6 4" stroke="#555"/><circle cx="-4" cy="4" r="2" fill="#eee" stroke="#555"/><text x="37" y="4">attribdelete1</text><use href="#clock" x="44" y="13"/><use href="#padlock" x="57" y="13"/></g>
            <g transform="translate(1401 712)"><use href="#bar"/><use href="#port" y="-14"/><use href="#port" y="14"/><use href="#node-tube" x="-7" y="-7" width="14" height="14"/><text x="35" y="4">carve6</text><use href="#clock" x="42" y="13"/></g>
            <g transform="translate(1257 766)"><use href="#bar"/><use href="#port" x="-11" y="-14"/><use href="#port" x="12" y="-14"/><use href="#port" y="14"/><path d="M-6-4l4-2h9v7l-6 1v4l-6 0z" fill="#a6a9b5" stroke="#777c8a"/><path d="M-6-4l4-2h9l-3 2z" fill="#e3c3c6"/><text x="35" y="4">sweep1</text><use href="#clock" x="42" y="13"/></g>
            <g transform="translate(1340 825)"><use href="#lozenge"/><use href="#port" y="16"/><use href="#node-merge" x="-8" y="-8" width="16" height="16"/><text x="35" y="5">merge1</text><use href="#clock" x="42" y="13"/></g>
            <g transform="translate(1155 890)"><use href="#lozenge"/><use href="#port" y="16"/><use href="#node-merge" x="-8" y="-8" width="16" height="16"/><text x="35" y="5">merge3</text><use href="#warn" x="41" y="13"/><use href="#clock" x="54" y="13"/></g>
            <text x="1128" y="557">e2</text><text x="1131" y="804">4</text><text class="sub" x="1127" y="672">nd</text>
            <text class="hint" x="1286" y="983">smooth1 (Smooth) node</text>
          </g>
        </svg>
      </div>
    </section>

    <section class="pane params">
      <div class="tabs"><button class="tab on it">transform1<b>×</b></button><svg class="ic ic6"><use href="#plus"/></svg><span class="grow"></span><svg class="ic ic6"><use href="#win"/></svg><svg class="ic ic5"><use href="#caret"/></svg></div>
      <div class="path"><svg class="ic"><use href="#back"/></svg><svg class="ic"><use href="#fwd"/></svg><div class="crumbs"><svg class="ic"><use href="#obj"/></svg>obj<i class="sep"></i><svg class="ic"><use href="#geo"/></svg>geo1<span class="grow"></span><svg class="ic ic5"><use href="#caret-dim"/></svg></div><svg class="ic"><use href="#pin"/></svg><svg class="ic ic12"><use href="#target"/></svg></div>
      <div class="ophead"><svg class="ic"><use href="#node-x"/></svg><label for="opname">Transform</label><input id="opname" class="dark" value="transform1"><svg class="ic ic10"><use href="#gear"/></svg><svg class="ic ic10"><use href="#brush"/></svg><svg class="ic ic10"><use href="#search"/></svg><svg class="ic ic10"><use href="#info"/></svg><svg class="ic ic10"><use href="#help"/></svg></div>
      <form class="form">
        <div class="row"><label for="grp">Group</label><div class="val"><input id="grp" class="dark strong" value="move"><span class="drop"><svg class="ic ic5"><use href="#caret"/></svg></span><svg class="ic ic10"><use href="#cursor"/></svg></div></div>
        <div class="row"><label for="gt">Group Type</label><div class="val tight"><select id="gt" class="w70"><option>Points</option></select><i class="spin"></i></div></div>
        <div class="row"><label for="to">Transform Order</label><div class="val tight"><select id="to" class="w63"><option>Scale Rot Trans</option></select><i class="spin"></i><select class="w40" aria-label="Rotate order"><option>Rx Ry Rz</option></select><i class="spin"></i></div></div>
        <div class="row vec"><label for="tx">Translate</label><div class="val"><input id="tx" class="dark r" value="0"><input class="dark g" value="0" aria-label="Translate Y"><input class="dark b" value="0" aria-label="Translate Z"></div></div>
        <div class="row vec"><label for="rx">Rotate</label><div class="val"><input id="rx" class="dark r" value="0"><input class="dark g" value="0" aria-label="Rotate Y"><input class="dark b" value="0" aria-label="Rotate Z"></div></div>
        <div class="row vec"><label for="sx">Scale</label><div class="val"><input id="sx" class="dark r" value="1"><input class="dark g" value="1" aria-label="Scale Y"><input class="dark b" value="1" aria-label="Scale Z"></div></div>
        <div class="row vec"><label for="hx">Shear</label><div class="val"><input id="hx" class="dark" value="0"><input class="dark" value="0" aria-label="Shear Y"><input class="dark" value="0" aria-label="Shear Z"></div></div>
        <div class="row uni"><label for="us">Uniform Scale</label><div class="val"><input id="us" class="dark keyed" value="0.92"><input type="range" min="0" max="10" step="0.01" value="0.92" aria-label="Uniform Scale slider"></div></div>
        <button type="button" class="fold">Pivot Transform</button>
        <button type="button" class="fold">Pre-Transform</button>
        <div class="row"><span></span><div class="val"><button type="button" class="push">Move Centroid to Origin</button><button type="button" class="push">Move Pivot to Centroid</button></div></div>
        <div class="row"><label for="at">Attributes</label><div class="val"><input id="at" class="dark" value="*"><span class="drop"><svg class="ic ic5"><use href="#caret"/></svg></span></div></div>
        <div class="checks">
          <label><input type="checkbox">Recompute Point Normals</label>
          <label><input type="checkbox" checked>Recompute Affected Normals</label>
          <label><input type="checkbox" checked>Preserve Normal Length</label>
          <label><input type="checkbox">Invert Transformation</label>
        </div>
        <div class="row off"><label><input type="checkbox">Output Attribute</label><div class="val"><input class="faint" value="xform" aria-label="Output Attribute name" disabled><select disabled aria-label="Output mode"><option>Post-Multiply</option></select><i class="spin"></i></div></div>
      </form>
    </section>
  </main>

  <div class="playbar">
    <div class="transport">
      <div class="btns"><button aria-label="First"><svg class="ic ic12" viewBox="0 0 12 12"><path d="M0 2h2v8H0zM7 2v8L2 6zM12 2v8L7 6z"/></svg></button><button aria-label="Reverse"><svg class="ic" viewBox="0 0 12 12"><path d="M10 0v12L2 6z"/></svg></button><button class="lit" aria-label="Stop"><svg class="ic" viewBox="0 0 12 12"><path d="M0 0h12v12H0z"/></svg></button><button aria-label="Play"><svg class="ic" viewBox="0 0 12 12"><path d="M2 0v12l8-6z"/></svg></button><button aria-label="Last"><svg class="ic ic12" viewBox="0 0 12 12"><path d="M10 2h2v8h-2zM5 2v8l5-4zM0 2v8l5-4z"/></svg></button><input class="dark frame" value="90" aria-label="Frame"><button class="half" aria-label="Previous"><svg class="ic ic6" viewBox="0 0 12 12"><path d="M7 0v12L0 6zM9 0h3v12H9z"/></svg></button><button class="half" aria-label="Next"><svg class="ic ic6" viewBox="0 0 12 12"><path d="M5 0v12l7-6zM0 0h3v12H0z"/></svg></button></div>
      <div class="btns low"><button aria-label="Loop"><svg class="ic" viewBox="0 0 12 12"><path d="M0 0h12v4H0z"/></svg></button><button aria-label="Audio"><svg class="ic"><use href="#key"/></svg></button><button aria-label="Auto"><svg class="ic"><use href="#rock"/></svg></button><button class="lit" aria-label="Real time"><svg class="ic"><use href="#info"/></svg></button><button aria-label="Options"></button></div>
    </div>
    <div class="ruler" id="ruler"></div>
    <div class="keys">
      <button class="keybtn" aria-label="Set key"><svg class="ic ic12"><use href="#key"/></svg></button>
      <svg class="ic ic5"><use href="#caret-dim"/></svg>
      <div class="channels"><button class="sq" aria-label="Scope"><svg class="ic ic10"><use href="#scope"/></svg></button><button class="ch">0 keys, 10/10 channels<i>▲</i></button><button class="sq" aria-label="Key mode"><svg class="ic ic10"><use href="#people"/></svg></button><button class="ch">Key All Channels<i>▲</i></button></div>
    </div>
  </div>

  <footer class="foot">
    <svg class="logo" width="178" height="42" viewBox="0 0 178 42"><path d="M5 3H170q4 0 4 4V30q0 4-4 4H19L3 29V6q0-3 2-3z" fill="none" stroke="#fff" stroke-width="5" stroke-linejoin="round"/><path d="M1 27l14 14v-9z" fill="#fff"/><text x="89" y="26" text-anchor="middle">BANDAI NAMCO</text></svg>
    <p class="caption">Houdini <span>による</span> UI <span>作成について</span></p>
    <p class="page">75</p>
  </footer>
</div>

<h1 class="banner"><span>メニュー画面</span> SOP</h1>
<div class="callout"><svg width="168" height="76"><ellipse cx="84" cy="38" rx="80" ry="34" fill="none" stroke="#ff4b14" stroke-width="6"/></svg><p>transform</p></div>
<script src="main.js"></script>
</body>
</html>
```
FILE: styles.css
```css
* { box-sizing: border-box; }
:root {
  --ui: "Noto Sans CJK JP", "Noto Sans", sans-serif;
  --mono: "DejaVu Sans Mono", "Liberation Mono", monospace;
  --accent: #ff4b14;
}
body { margin: 0; background: #000; color: #c4c4c4; font: 7px/10px var(--ui); overflow: hidden; }
button, input, select { font: inherit; color: inherit; border: 0; padding: 0; margin: 0; background: none; border-radius: 0; }
select { appearance: none; }
a { color: inherit; text-decoration: none; }
p, h1 { margin: 0; }
.sprite { position: absolute; width: 0; height: 0; }
.ic { width: 9px; height: 9px; flex: none; display: block; }
.ic5 { width: 5px; height: 5px; }
.ic6 { width: 6px; height: 6px; }
.ic7 { width: 7px; height: 7px; }
.ic10 { width: 10px; height: 10px; }
.ic12 { width: 12px; height: 12px; }
.lit { background: #4d6788; }
.grow { flex: 1; }
.gap4 { width: 4px; }

.app { display: flex; flex-direction: column; height: 100vh; }
.menubar { display: flex; align-items: center; height: 17px; padding: 0 7px 0 10px; background: linear-gradient(#424242, #343434); border-bottom: 1px solid #1c1c1c; font-size: 8px; gap: 4px; }
.menus { display: flex; gap: 4px; margin-right: 12px; }
.desk { display: flex; align-items: center; gap: 3px; width: 78px; height: 16px; padding-left: 3px; background: #454545; }
.desk select { flex: 1; min-width: 0; }
.desk.last { margin-left: auto; width: 100px; }
.menubar > .ic10 { margin-left: 6px; }
.spin { width: 10px; align-self: stretch; display: grid; place-content: center; gap: 1px; background: #303030; }
.spin::before, .spin::after { content: ""; border: 2px solid transparent; border-top: 0; border-bottom: 3px solid #aaa; }
.spin::after { transform: scaleY(-1); }

.panes { flex: 1; min-height: 0; display: grid; grid-template-columns: 218fr 508fr 405fr 423fr 366fr; }
.pane { display: flex; flex-direction: column; min-width: 0; min-height: 0; background: #303030; border-right: 4px solid #4b4b4b; }
.pane:last-child { border-right: 0; }
.tabs { display: flex; align-items: center; gap: 5px; height: 11px; flex: none; padding-right: 4px; background: #232323; font-size: 6px; }
.tab { display: flex; align-items: center; gap: 7px; height: 11px; padding: 0 4px; line-height: 11px; background: #2b2b2b; white-space: nowrap; color: #b4b4b4; }
.tab + .tab { margin-left: -4px; }
.tab.on { background: #404040; }
.tab b { color: #eee; font-size: 7px; }
.it { font-style: italic; }
.path { display: flex; align-items: center; gap: 4px; height: 22px; flex: none; padding: 0 4px; background: linear-gradient(#424242, #343434); border-bottom: 2px solid #4a4a4a; font-size: 8px; }
.crumbs { flex: 1; display: flex; align-items: center; gap: 3px; height: 16px; margin-left: 2px; padding: 0 3px 0 5px; border: 1px solid #262626; background: #373737; }
.sep { width: 4px; height: 12px; border-right: 1px solid #222; transform: skewX(-15deg); }
.tools { display: flex; align-items: center; gap: 6px; height: 17px; flex: none; padding: 0 4px; background: #333; }
.tools.wide { padding: 0 15px; }

.treebox { flex: 1; min-height: 0; padding-top: 59px; background: linear-gradient(90deg, transparent 98px, #222 98px 99px, transparent 99px 105px, #222 105px 106px, transparent 106px 124px, #222 124px 125px, transparent 125px 134px, #222 134px 135px, transparent 135px 163px, #222 163px 164px, transparent 164px 177px, #222 177px 178px, transparent 178px 197px, #222 197px 198px, transparent 198px), repeating-linear-gradient(#2b2b2b 0 9px, #353535 9px 19px); }
.tree { width: 100%; table-layout: fixed; border-collapse: collapse; }
.tree tr { height: 10px; }
.tree tr:nth-child(even) { height: 9px; }
.tree td { padding: 0; line-height: 9px; white-space: nowrap; overflow: hidden; }
.tree td:first-child { width: 107px; padding-left: 11px; }
.tree td:first-child.d2 { padding-left: 30px; }
.tree td:nth-child(2) { width: 31px; }
.tree td:nth-child(3) { width: 41px; }
.tree td:nth-child(4) .ic { margin-right: 2px; }
.tree td:nth-child(4) .ic:last-child { margin-left: 8px; margin-right: 0; }
.tree .ic { display: inline-block; vertical-align: middle; margin-right: 2px; }
.tree em { font-style: normal; color: #3f9a3f; }
.filter { display: flex; align-items: center; gap: 8px; height: 14px; padding: 0 4px 0 2px; background: #333; }
.filter label { display: flex; align-items: center; gap: 6px; }
.filter .dark { flex: 1; min-width: 0; }

input[type=checkbox] { appearance: none; width: 8px; height: 8px; background: #151515; display: grid; place-content: center; }
input[type=checkbox]:checked::before { content: "✔"; color: #eee; font: 8px/8px "DejaVu Sans", sans-serif; }
.dark { background: #131313; height: 12px; min-width: 0; padding: 0 2px; font: 7px/10px var(--mono); color: #ddd; }

.scene { display: flex; height: 506px; flex: none; padding-left: 5px; background: #333; border-bottom: 1px solid #222; }
.viewport { flex: 1; position: relative; background: #000; overflow: hidden; }
.grid3d { display: block; width: 100%; height: 100%; }
.axis-x { fill: #9c6250; }
.axis-z { fill: #5f5fa8; }
.axis-x text, .axis-z text { font: 14px "Liberation Sans", sans-serif; }
.gnomon { font: 7px "Liberation Sans", sans-serif; }
.pills { position: absolute; top: 4px; right: 3px; display: flex; gap: 4px; }
.pills button { height: 12px; padding: 0 3px; border: 1px solid #aaa; border-radius: 6px; line-height: 10px; color: #ddd; background: #000; }
.rail { width: 16px; display: flex; flex-direction: column; align-items: center; gap: 3px; padding: 7px 0 1px; background: #3a3a3a; }
.rail .ic { width: 13px; height: 13px; padding: 1px; }
.railtop { display: flex; flex-direction: column; justify-content: space-between; height: 376px; margin-bottom: 5px; }

.details { flex: 1; min-height: 0; display: flex; flex-direction: column; border-top: 4px solid #4a4a4a; }
.details .tabs { height: 12px; gap: 4px; }
.details .tab { height: 12px; }
.tools.roomy { height: 19px; gap: 2px; }
.roomy .ic { width: 13px; height: 13px; padding: 2px; }
.split { flex: 1; min-height: 0; display: grid; grid-template-columns: 330fr 171fr; gap: 4px; background: #4a4a4a; }
.sheet { display: flex; flex-direction: column; background: #2e2e2e; }
.props { width: 100%; border-collapse: collapse; table-layout: fixed; font-size: 8px; }
.props th { height: 15px; padding: 0 4px; text-align: left; font-weight: 400; background: linear-gradient(#252525, #303030); }
.props th:first-child { width: 62px; }
.props td { height: 10px; padding: 0; background: #59482a; }
.stripes { flex: 1; background: repeating-linear-gradient(#2d2d2d 0 10px, #303030 10px 20px); }
.funnelbar { height: 14px; padding: 2px 4px; background: #151515; border-top: 1px solid #444; }
.meta { background: #3a3a3a; min-width: 0; }
.metatabs { display: flex; height: 13px; background: #262626; overflow: hidden; font-size: 8px; }
.metatabs button { padding: 0 4px; background: #333; color: #777; white-space: nowrap; border-right: 1px solid #1d1d1d; }
.metatabs .on { background: #3a3a3a; color: #ccc; }

.shelves { display: grid; grid-template-columns: 204fr 197fr; flex: none; height: 25px; border-bottom: 1px solid #262626; }
.shelf { border-left: 5px solid #3c3c3c; min-width: 0; }
.shelficons { display: flex; align-items: center; gap: 6px; height: 13px; padding-left: 4px; background: #373737; }
.one { width: 14px; height: 14px; border: 1px solid #ccc; border-radius: 50%; text-align: center; line-height: 12px; }
.netmenu { display: flex; align-items: center; gap: 8px; height: 13px; flex: none; padding: 0 3px 0 11px; background: #303030; border-bottom: 1px solid #1f1f1f; font-size: 8px; }
.neticons { display: flex; gap: 5px; }
.neticons:first-of-type, .neticons:last-child { margin-left: auto; }
.neticons + .neticons { margin-left: 7px; }
.canvas { flex: 1; min-height: 0; position: relative; overflow: hidden; background: #303030; }
.context { position: absolute; top: 8px; right: 5px; font-size: 15px; line-height: 20px; font-weight: 700; color: #595959; }
.graph { display: block; width: 100%; height: 100%; }
.graph text { font: 12px var(--ui); fill: #cfcfcf; }
.graph .sub { font-size: 11px; fill: #6a9bd8; }
.graph .dim { fill: #5c5c5c; }
.graph .hint { font-size: 10px; }
.wires { fill: none; stroke: #4b6a92; stroke-width: 1; }

.params { background: #3a3a3a; }
.ophead { display: flex; align-items: center; gap: 6px; height: 15px; flex: none; padding: 0 4px 0 6px; background: #303030; }
.ophead label { font-weight: 700; margin: 0 -3px; color: #ddd; }
.ophead .dark { flex: 1; }
.form { display: flex; flex-direction: column; padding: 0 7px 0 0; }
.row { display: grid; grid-template-columns: 88px 1fr; gap: 9px; align-items: center; height: 16px; }
.row > label { text-align: right; }
.row > label, .checks label, .fold, .push { color: #b6b6b6; }
.val { display: flex; align-items: center; gap: 3px; min-width: 0; }
.val > .dark { flex: 1; }
.val > .ic10 { margin: 0 5px 0 4px; }
.val .strong { font-weight: 700; color: #fff; }
.val select { height: 13px; padding: 0 0 0 8px; background: linear-gradient(#505050, #424242); line-height: 13px; }
.val .spin { height: 13px; align-self: auto; }
.tight { gap: 0; }
.tight .spin + select { margin-left: 3px; }
.w70 { width: 70px; }
.w63 { width: 63px; }
.w40 { width: 40px; }
.drop { width: 11px; height: 12px; display: grid; place-content: center; opacity: .6; }
.vec { height: 15px; }
.vec .dark { height: 14px; padding-top: 1px; border-bottom: 1px solid #131313; }
.vec .r { border-color: #a83a20; }
.vec .g { border-color: #4f9a35; }
.vec .b { border-color: #3a3590; }
.uni { height: 14px; }
.val > .keyed { flex: none; width: 45px; background: #40817f; border-bottom: 1px solid #a02c2c; font-weight: 700; color: #fff; }
input[type=range] { appearance: none; flex: 1; min-width: 0; height: 12px; background: linear-gradient(90deg, #2456a8 18px, #111 18px) center / 100% 2px no-repeat; }
input[type=range]::-webkit-slider-thumb { appearance: none; width: 3px; height: 12px; background: #aaa; }
.fold { display: flex; align-items: center; gap: 5px; height: 16px; padding-left: 5px; text-align: left; background: #363636; }
.fold::before { content: ""; border: 3px solid transparent; border-left: 4px solid #eee; border-right: 0; }
.push { flex: none; width: 93px; height: 14px; background: linear-gradient(#4c4c4c, #404040); border: 1px solid #2c2c2c; line-height: 12px; }
.checks { padding: 0 0 0 97px; }
.checks label { display: flex; align-items: center; gap: 5px; height: 12px; }
.checks label:nth-child(odd) { height: 13px; }
.off > label { display: flex; justify-content: space-between; padding-left: 13px; color: #777; }
.off .val { color: #777; }
.off .faint { flex: 1; min-width: 0; height: 12px; background: #343434; font: 7px/10px var(--mono); color: #555; }
.off .spin { opacity: .5; }
.off .val select { background: none; opacity: 1; padding-right: 9px; }

.playbar { display: flex; height: 31px; flex: none; background: #2d2d2d; border-top: 1px solid #4a4a4a; overflow: hidden; }
.transport { width: 145px; flex: none; padding: 4px 3px 0 6px; border-left: 3px solid #444; }
.btns { display: flex; height: 18px; }
.btns button { width: 17px; display: grid; place-content: center; background: #3b3b3b; border: 1px solid #222; fill: #e4e4e4; }
.btns button.lit { background: #5b7ba5; }
.btns .half { width: 9px; }
.btns .frame { height: 18px; width: 31px; font: 8px/18px var(--ui); }
.low { margin-top: 4px; }
.ruler { flex: 1; display: flex; position: relative; z-index: 0; background: linear-gradient(#666, #666) 0 13px / 100% 2px no-repeat; }
.ruler span { flex: 1 1 0; min-width: 0; position: relative; height: 18px; border-left: 1px solid #6a6a6a; font-size: 6px; line-height: 10px; color: #7d7d7d; border-image: linear-gradient(transparent 11px, #777 11px 16px, transparent 16px) 1; }
.ruler .major { color: #bbb; border-image: linear-gradient(transparent 11px, #aaa 11px 18px, transparent 18px) 1; }
.ruler .keyed::after { content: ""; position: absolute; inset: 6px 0 -4px -1px; background: #3f7a05; z-index: -1; }
.ruler .now { border-color: transparent; border-image: none; }
.now mark { position: absolute; left: -8px; top: 1px; width: 16px; height: 11px; background: #000; border: 1px solid #999; color: #fff; font-size: 8px; line-height: 9px; text-align: center; }
.keys { width: 155px; flex: none; display: flex; align-items: center; gap: 4px; padding: 0 3px 0 2px; }
.keybtn { width: 24px; height: 24px; flex: none; margin-top: 11px; border: 1px solid #5d9c98; border-radius: 50%; background: #2e4f54; display: grid; place-content: center; }
.channels { flex: 1; display: grid; grid-template-columns: 14px 1fr; gap: 3px; align-self: start; margin: 5px 0 0 5px; }
.sq { height: 14px; background: #444; display: grid; place-content: center; }
.ch { height: 14px; background: linear-gradient(#505050, #3e3e3e); text-align: right; padding-right: 4px; line-height: 14px; white-space: nowrap; }
.ch i { font-style: normal; font-size: 5px; margin-left: 8px; color: #999; }
.ch:last-child { display: flex; justify-content: space-between; padding-left: 8px; }

.foot { display: flex; align-items: center; height: 60px; flex: none; position: relative; padding: 0 61px 0 57px; background: #000; }
.logo text { font: 700 19px Lato, sans-serif; fill: #fff; }
.caption { margin-left: 483px; font: 32px/60px "Noto Sans", sans-serif; color: #6e6e6e; white-space: nowrap; }
.caption span { font-family: var(--ui); font-size: 28px; }
.page { margin-left: auto; width: 90px; text-align: center; background: #fe0000; color: #fff; font: 300 30px/60px "Noto Sans", sans-serif; }

.banner { position: absolute; left: 0; top: 57px; width: 540px; height: 75px; padding-left: 54px; background: var(--accent); color: #fff; font: 400 64px/75px "Noto Sans", sans-serif; white-space: nowrap; }
.banner span { font-family: var(--ui); font-size: 53px; line-height: 1; vertical-align: 3px; margin-right: 4px; }
.callout { position: absolute; left: 1360px; top: 536px; display: flex; align-items: flex-start; }
.callout p { margin: 4px 0 0 -11px; padding-left: 16px; width: 160px; background: #3a3a3a; color: var(--accent); font: 700 25px/57px "Noto Sans", sans-serif; }
.callout svg { position: relative; }
```
FILE: main.js
```js
// Timeline: one cell per frame, keyed frames are filled
const keyed = [12, 15];
const ruler = document.getElementById('ruler');
for (let f = 1; f <= 90; f++) {
  const cell = document.createElement('span');
  if (f === 90) {
    cell.className = 'now';
    const mark = document.createElement('mark');
    mark.textContent = f;
    cell.append(mark);
  } else {
    cell.textContent = f;
    if (f % 12 === 0) cell.classList.add('major');
    if (keyed.includes(f)) cell.classList.add('keyed');
  }
  ruler.append(cell);
}

// Perspective ground grid of the viewport
const NS = 'http://www.w3.org/2000/svg';
const lines = document.getElementById('lines');
const line = (x1, y1, x2, y2, major) => {
  const l = document.createElementNS(NS, 'line');
  Object.entries({ x1, y1, x2, y2, stroke: major ? '#2a3a4a' : '#23282c' }).forEach(([k, v]) => l.setAttribute(k, v));
  lines.append(l);
};
for (let k = -11; k <= 11; k++) line(240 + 24 * k, 0, 245 + 45 * k, 505, k % 5 === 0);
[7, 22, 39, 56, 73, 93, 113, 135, 159, 182, 209, 238, 268, 302, 337, 377, 419, 465]
  .forEach((y, i) => line(0, y + 1, 483, y - 1, i % 5 === 0));
```
